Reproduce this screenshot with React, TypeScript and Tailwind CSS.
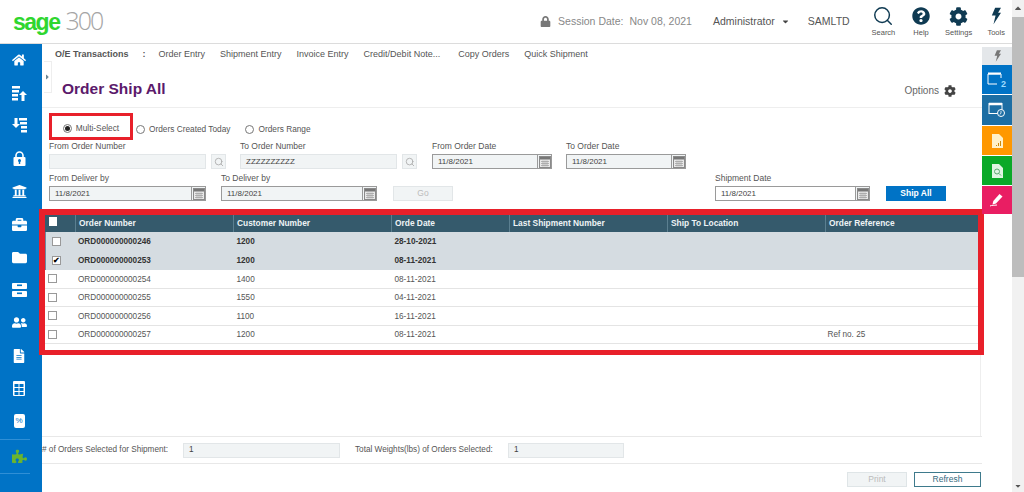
import React from "react";
import { Search } from "lucide-react";
import {
  FaHome, FaLock, FaUniversity, FaBriefcase, FaFolder, FaUserFriends, FaFileAlt, FaPuzzlePiece,
  FaCog, FaQuestionCircle, FaCaretDown, FaCaretRight, FaCaretUp,
} from "react-icons/fa";

const Cal = () => (
  <svg width="12" height="12" viewBox="0 0 12 12">
    <rect x="0.5" y="0.5" width="11" height="11" fill="#e9e9e9" stroke="#8a8a8a" />
    <rect x="1" y="1" width="10" height="2.5" fill="#777" />
    <path d="M2 5.500h8M2 7.500h8M2 9.500h8M4 4.500v6M6 4.500v6M8 4.500v6" stroke="#a5a5a5" strokeWidth="0.8" />
  </svg>
);

const Bolt = ({ w, h, c }: { w: number; h: number; c: string }) => (
  <svg width={w} height={h} viewBox="0 0 12 20" fill={c}>
    <path d="M5 0h7L8.500 6H12L3 20l2.500-10.500H1z" />
  </svg>
);

const SortUp = () => (
  <svg width="15" height="15" viewBox="0 0 15 15" fill="#fff">
    <path d="M0 0h8v2.500H0zM0 4h7v2.500H0zM0 8h6v2.500H0zM0 12h6v2.500H0z" />
    <path d="M11 5l4 4h-2.500v6h-3V9H7z" />
  </svg>
);
const SortDown = () => (
  <svg width="15" height="15" viewBox="0 0 15 15" fill="#fff">
    <path d="M7 0h8v2.500H7zM8 4h7v2.500H8zM9 8h6v2.500H9zM9 12h6v2.500H9z" />
    <path d="M4 10L0 6h2.500V0h3v6H8z" />
  </svg>
);
const Padlock = () => (
  <svg width="13" height="15" viewBox="0 0 13 15">
    <path d="M3 7V4.500a3.500 3.500 0 017 0V7" fill="none" stroke="#fff" strokeWidth="1.6" />
    <rect x="0.500" y="6" width="12" height="9" rx="1" fill="#fff" />
    <circle cx="6.500" cy="9.500" r="1.500" fill="#0073c6" />
    <rect x="5.800" y="10" width="1.400" height="3" fill="#0073c6" />
  </svg>
);
const Drawers = () => (
  <svg width="15" height="14" viewBox="0 0 15 14">
    <rect width="15" height="6" rx="0.800" fill="#fff" />
    <rect y="8" width="15" height="6" rx="0.800" fill="#fff" />
    <rect x="5" y="1.500" width="5" height="1.600" fill="#0073c6" />
    <rect x="5" y="9.500" width="5" height="1.600" fill="#0073c6" />
  </svg>
);
const Grid = () => (
  <svg width="12" height="15" viewBox="0 0 12 15">
    <rect width="12" height="15" rx="1" fill="#fff" />
    <path d="M1.500 3h4v3h-4zM6.500 3h4v3h-4zM1.500 7h4v3h-4zM6.500 7h4v3h-4zM1.500 11h4v3h-4zM6.500 11h4v3h-4z" fill="#0073c6" />
  </svg>
);
const Percent = () => (
  <span className="flex h-[14px] w-[11px] items-center justify-center rounded-[2px] bg-white text-[8px] leading-none text-[#0073c6]">%</span>
);

const sideIcons: React.ReactNode[] = [
  <FaHome size={14} />, <SortUp />, <SortDown />, <Padlock />, <FaUniversity size={15} />,
  <FaBriefcase size={15} />, <FaFolder size={15} />, <Drawers />, <FaUserFriends size={15} />,
  <FaFileAlt size={14} />, <Grid />, <Percent />,
];

const Field = ({ label, value, w, disabled, icon, soft, white }: { label: string; value?: string; w: number; disabled?: boolean; icon?: React.ReactNode; soft?: boolean; white?: boolean }) => (
  <div className="flex flex-col">
    <span className="h-[11px] text-[8.5px] leading-[11px] text-[#555]">{label}</span>
    <div style={{ width: w }} className={`mt-[2px] flex h-[15px] items-center justify-between border ${disabled || soft ? "border-[#e2e6e8]" : "border-[#9a9a9a]"} ${white ? "bg-white" : "bg-[#f1f4f5]"}`}>
      <span className="pl-[5px] text-[8px] leading-none text-[#444]">{value}</span>
      {icon}
    </div>
  </div>
);

const CalBox = () => (
  <span className="flex h-[13px] w-[14px] items-center justify-center border-l border-[#9a9a9a] bg-[#f1f4f5]"><Cal /></span>
);

const Radio = ({ on, label, className }: { on?: boolean; label: string; className?: string }) => (
  <span className={`flex items-center gap-[4px] ${className ?? ""}`}>
    <span className="flex h-[9px] w-[9px] items-center justify-center rounded-full border border-[#777] bg-white">
      {on && <span className="h-[5px] w-[5px] rounded-full bg-[#222]" />}
    </span>
    <span className="text-[8.3px] leading-none text-[#555]">{label}</span>
  </span>
);

const cols = ["w-[29.5px]", "w-[158px]", "w-[158px]", "w-[118px]", "w-[158px]", "w-[158px]", "flex-1"];
const headers = ["", "Order Number", "Customer Number", "Orde Date", "Last Shipment Number", "Ship To Location", "Order Reference"];
const rows = [
  { n: "ORD000000000246", c: "1200", d: "28-10-2021", r: "", sel: true, chk: false },
  { n: "ORD000000000253", c: "1200", d: "08-11-2021", r: "", sel: true, chk: true },
  { n: "ORD000000000254", c: "1400", d: "08-11-2021", r: "" },
  { n: "ORD000000000255", c: "1550", d: "04-11-2021", r: "" },
  { n: "ORD000000000256", c: "1100", d: "16-11-2021", r: "" },
  { n: "ORD000000000257", c: "1200", d: "08-11-2021", r: "Ref no. 25" },
];

const Top = ({ icon, label }: { icon: React.ReactNode; label: string }) => (
  <div className="flex w-[37.6px] flex-col items-center">
    <span className="flex h-[22px] items-center text-[#0f3a52]">{icon}</span>
    <span className="mt-[1px] text-[7.5px] leading-[10px] text-[#555]">{label}</span>
  </div>
);

const Tile = ({ bg, children, h }: { bg: string; children: React.ReactNode; h: string }) => (
  <div className={`flex w-[30px] items-center justify-center ${bg} ${h}`}>{children}</div>
);

export default function App() {
  return (
    <div className="flex h-[492px] w-[1024px] overflow-hidden bg-white font-['Liberation_Sans',Arial,sans-serif]">
      <div className="flex min-w-0 flex-1 flex-col">
        <header className="flex h-[44px] shrink-0 items-center border-b border-[#dcdcdc]">
          <div className="mb-[2px] ml-[13px] flex items-baseline">
            <span className="text-[23px] font-bold leading-none tracking-[-1.5px] text-[#2fd62f]">sage</span>
            <span className="ml-[6px] text-[25px] font-light leading-none tracking-[-2px] text-[#a5a5a5] font-['Open_Sans',sans-serif]">300</span>
          </div>
          <div className="ml-auto mr-[-3px] flex items-center">
            <FaLock size={11} className="text-[#777]" />
            <span className="ml-[7px] text-[10.5px] text-[#888]">Session Date:</span>
            <span className="ml-[6px] text-[10.5px] text-[#888]">Nov 08, 2021</span>
            <span className="ml-[21px] text-[10.5px] text-[#555]">Administrator</span>
            <FaCaretDown size={9} className="ml-[6px] text-[#444]" />
            <span className="ml-[18px] text-[10.5px] text-[#555]">SAMLTD</span>
            <div className="ml-[15px] flex">
              <Top label="Search" icon={<Search size={22} strokeWidth={1.6} />} />
              <Top label="Help" icon={<FaQuestionCircle size={18} />} />
              <Top label="Settings" icon={<FaCog size={19} />} />
              <Top label="Tools" icon={<Bolt w={10} h={18} c="#0f3a52" />} />
            </div>
          </div>
        </header>
        <div className="flex min-h-0 flex-1">
          <aside className="relative z-10 flex w-[42px] shrink-0 flex-col items-center bg-[#0073c6] text-white">
            {sideIcons.map((ic, i) => (
              <div key={i} className="flex h-[32.8px] w-full shrink-0 items-center justify-center pr-[4px]">{ic}</div>
            ))}
            <div className="mr-[12px] mt-[1px] h-[1px] w-[30px] bg-[#2f8fd6]" />
            <div className="flex h-[33px] w-full items-center justify-center pr-[4px]"><FaPuzzlePiece size={15} className="text-[#6ab42f]" /></div>
            <div className="mr-[12px] h-[1px] w-[30px] bg-[#2f8fd6]" />
          </aside>
          <main className="relative flex min-w-0 flex-1 flex-col">
            <span className="absolute left-[2px] top-[17px] flex h-[32px] w-[8px] items-center border border-l-0 border-[#eeeeee] bg-white text-[#6d8794]"><FaCaretRight size={8} /></span>
            <nav className="flex h-[22px] shrink-0 items-center pl-[13px] text-[9px] text-[#555]">
              <span className="font-bold">O/E Transactions</span>
              <span className="ml-[14px] font-bold">:</span>
              <span className="ml-[13px]">Order Entry</span>
              <span className="ml-[15px]">Shipment Entry</span>
              <span className="ml-[15px]">Invoice Entry</span>
              <span className="ml-[15px]">Credit/Debit Note...</span>
              <span className="ml-[18px]">Copy Orders</span>
              <span className="ml-[15px]">Quick Shipment</span>
            </nav>
            <div className="flex h-[42px] shrink-0 items-center border-b border-[#eeeeee] pl-[20px] pr-[26px] pt-[4px]">
              <h1 className="text-[15.5px] font-bold text-[#5b1a6b]">Order Ship All</h1>
              <span className="ml-auto mt-[4px] text-[10px] text-[#666]">Options</span>
              <FaCog size={12} className="ml-[5px] mt-[4px] text-[#444]" />
            </div>
            <div className="shrink-0 pl-[7px]">
              <div className="mt-[5px] flex h-[27px] items-center">
                <div className="flex h-[27px] w-[84px] items-center justify-center border-[3px] border-[#e8202a] pt-[3px]"><Radio on label="Multi-Select" /></div>
                <Radio label="Orders Created Today" className="ml-[3px] mt-[5px]" />
                <Radio label="Orders Range" className="ml-[15px] mt-[5px]" />
              </div>
              <div className="mt-[1px] flex">
                <Field label="From Order Number" w={157} disabled />
                <span className="ml-[5px] mt-[13px] flex h-[15px] w-[15px] items-center justify-center border border-[#e2e6e8] bg-[#f1f4f5]"><Search size={10} className="text-[#aaa]" /></span>
                <div className="ml-[14px]"><Field label="To Order Number" w={157} value="ZZZZZZZZZZ" soft /></div>
                <span className="ml-[5px] mt-[13px] flex h-[15px] w-[15px] items-center justify-center border border-[#e2e6e8] bg-[#f1f4f5]"><Search size={10} className="text-[#aaa]" /></span>
                <div className="ml-[15px]"><Field label="From Order Date" w={120} value="11/8/2021" icon={<CalBox />} /></div>
                <div className="ml-[14px]"><Field label="To Order Date" w={120} value="11/8/2021" icon={<CalBox />} /></div>
              </div>
              <div className="mt-[4px] flex items-end">
                <Field label="From Deliver by" w={157} value="11/8/2021" icon={<CalBox />} />
                <div className="ml-[15px]"><Field label="To Deliver by" w={156} value="11/8/2021" icon={<CalBox />} /></div>
                <button className="ml-[16px] h-[15px] w-[60px] border border-[#e2e6e8] bg-[#f1f4f5] text-[8.5px] text-[#bbb]">Go</button>
                <div className="ml-[262px]"><Field label="Shipment Date" w={155} value="11/8/2021" icon={<CalBox />} white /></div>
                <button className="ml-[16px] h-[15px] w-[60px] bg-[#0073c6] text-[8.5px] font-bold text-white">Ship All</button>
              </div>
            </div>
            <section className="relative z-20 ml-[-3px] mr-[-2px] mt-[8px] h-[146px] shrink-0 border-[6px] border-b-[5px] border-[#e8202a] bg-white">
              <div className="flex h-[17px] bg-[#355a6c] text-[8.4px] font-bold text-[#eef3f5]">
                {headers.map((h, i) => (
                  <div key={i} className={`${cols[i]} flex items-center border-l border-[#5b7f90] pl-[3.500px] first:border-l-0 first:items-start first:pt-[2px]`}>
                    {i === 0 && <span className="mt-0 h-[9px] w-[8px] bg-white" />}
                    {h}
                  </div>
                ))}
              </div>
              {rows.map((r) => (
                <div key={r.n} className={`flex items-center pt-[2px] text-[8.2px] ${r.sel ? "h-[19px] border-l border-[#6d8aa0] bg-[#d5dce1] font-bold text-[#333]" : "h-[18.5px] border-b border-[#e4e4e4] bg-white text-[#555]"}`}>
                  <div className={`${cols[0]} flex ${r.sel ? "-ml-[1px] pl-[7px]" : "pl-[3px]"} -mt-[2px]`}>
                    <span className={`flex h-[9px] w-[9px] items-center justify-center border border-[#999] bg-white text-[8px] leading-none text-black`}>{r.chk ? "✔" : ""}</span>
                  </div>
                  <div className={`${cols[1]} pl-[3.500px]`}>{r.n}</div>
                  <div className={`${cols[2]} pl-[4px]`}>{r.c}</div>
                  <div className={`${cols[3]} pl-[4px]`}>{r.d}</div>
                  <div className={cols[4]} />
                  <div className={cols[5]} />
                  <div className={`${cols[6]} pl-[3px]`}>{r.r}</div>
                </div>
              ))}
            </section>
            <div className="flex min-h-0 flex-1 flex-col">
              <div className="mr-[1px] flex-1 border-r border-[#eeeeee]" />
              <div className="flex h-[28px] shrink-0 items-center border-y border-[#e8e8e8] text-[8.2px] text-[#555]">
                <span className="w-[141px] whitespace-nowrap">{"# of Orders Selected for Shipment:"}</span>
                <span className="flex h-[15px] w-[157px] items-center border border-[#e2e6e8] bg-[#f1f4f5] pl-[5px] text-[#444]">1</span>
                <span className="ml-[15px] w-[153px] whitespace-nowrap">Total Weights(lbs) of Orders Selected:</span>
                <span className="flex h-[15px] w-[116px] items-center border border-[#e2e6e8] bg-[#f1f4f5] pl-[5px] text-[#444]">1</span>
              </div>
              <div className="flex h-[28px] shrink-0 items-start justify-end gap-[7px] pr-[1px] pt-[8px]">
                <button className="h-[15px] w-[60px] border border-[#dfe5e7] bg-[#f1f4f5] text-[8.5px] text-[#bbb]">Print</button>
                <button className="h-[15px] w-[67px] border border-[#3e7a8c] bg-white text-[8.5px] text-[#356a80]">Refresh</button>
              </div>
            </div>
          </main>
          <div className="relative z-30 flex w-[30px] shrink-0 flex-col gap-[1px] pt-[3px]">
            <Tile bg="bg-[#e4e7ea] -mb-[1px]" h="h-[18px]"><Bolt w={7} h={12} c="#777" /></Tile>
            <Tile bg="bg-[#0073c6]" h="h-[29px]">
              <svg width="20" height="16" viewBox="0 0 20 16" fill="none" stroke="#fff">
                <path d="M1 12V2h12" strokeWidth="1" />
                <path d="M1 1.500h13" strokeWidth="2" />
                <path d="M14 2v4M1 12h9" strokeWidth="1" />
                <text x="14" y="15" fontSize="9" fontWeight="700" fill="#9fdcff" stroke="none" fontFamily="Liberation Sans">2</text>
              </svg>
            </Tile>
            <Tile bg="bg-[#1c6ea4]" h="h-[30px]">
              <svg width="18" height="16" viewBox="0 0 18 16" fill="none" stroke="#fff">
                <rect x="1" y="1.500" width="13" height="10" strokeWidth="1" />
                <path d="M1 2h13" strokeWidth="2.500" />
                <circle cx="13" cy="11" r="3.500" fill="#1c6ea4" />
                <path d="M13 9v2l-1 1.500" strokeWidth="0.800" />
              </svg>
            </Tile>
            <Tile bg="bg-[#ff9800]" h="h-[29px]">
              <svg width="11" height="14" viewBox="0 0 11 14">
                <path d="M0 0h7l4 4v10H0z" fill="#fff1c9" />
                <path d="M4 11h1v1H4zM6 9h1v3H6zM8 7h1v5H8z" fill="#c98a10" />
              </svg>
            </Tile>
            <Tile bg="bg-[#0aa928]" h="h-[29px]">
              <svg width="11" height="14" viewBox="0 0 11 14">
                <path d="M0 0h7l4 4v10H0z" fill="#dff5e2" />
                <circle cx="5" cy="7.500" r="2.500" fill="none" stroke="#5aa870" />
                <path d="M7 9.500l2 2" stroke="#5aa870" />
              </svg>
            </Tile>
            <Tile bg="bg-[#e91e63]" h="h-[28px]">
              <svg width="14" height="14" viewBox="0 0 14 14" fill="#fff">
                <path d="M9.500 1l3 2.500-6.500 7-3.500 1 .8-3.500z" />
                <path d="M0 13c2-1 4-.5 7-1" stroke="#fff" strokeWidth="1" fill="none" />
              </svg>
            </Tile>
          </div>
        </div>
      </div>
      <div className="flex w-[12px] shrink-0 flex-col items-center bg-[#f1f1f1]">
        <FaCaretUp size={8} className="mt-[3px] h-[10px] text-[#555]" />
        <div className="mt-[4px] h-[260px] w-full bg-[#bdbdbd]" />
        <FaCaretDown size={8} className="mb-[2px] mt-auto text-[#555]" />
      </div>
    </div>
  );
}
